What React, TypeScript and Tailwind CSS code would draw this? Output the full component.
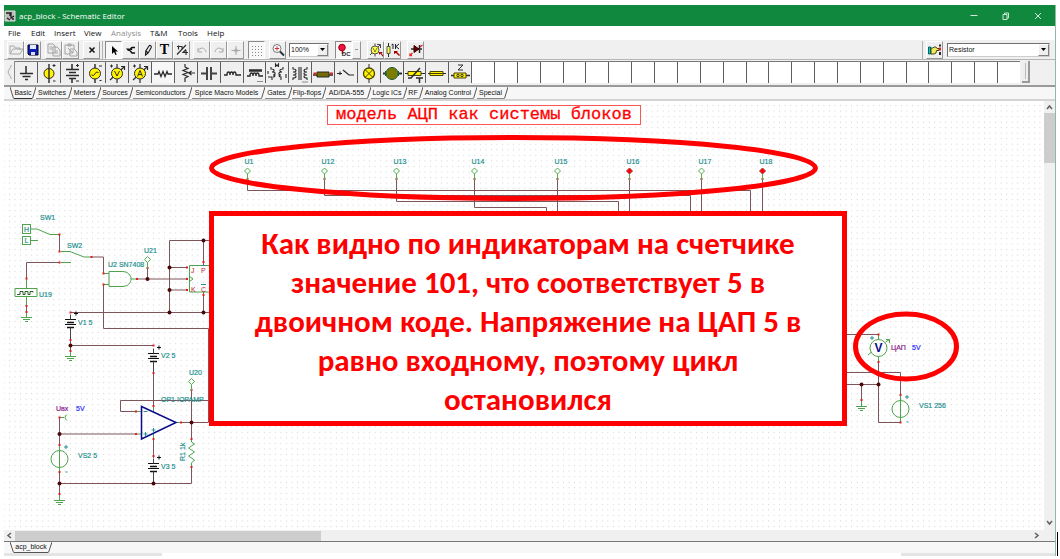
import React from "react";

const SANS = "font-['Liberation_Sans',sans-serif]";
const UI = "font-['Open_Sans','Noto_Sans',sans-serif]";

function Icon({ children, w = 16, h = 16 }: { children: React.ReactNode; w?: number; h?: number }) {
  return (
    <svg width={w} height={h} viewBox={`0 0 ${w} ${h}`} fill="none" stroke="#2a2a2a" strokeWidth="1" aria-hidden="true" className="shrink-0">
      {children}
    </svg>
  );
}

function ToolButton({ label, pressed, children }: { label: string; pressed?: boolean; children: React.ReactNode }) {
  return (
    <button
      type="button"
      aria-label={label}
      className={
        "flex h-[18px] w-[17px] shrink-0 items-center justify-center overflow-hidden border " +
        (pressed
          ? "border-t-[#8a8a8a] border-l-[#8a8a8a] border-r-white border-b-white bg-[#f8f8f8]"
          : "border-t-white border-l-white border-r-[#969696] border-b-[#969696] bg-[#efefef]")
      }
    >
      {children}
    </button>
  );
}

const folder = <Icon><path d="M2 12V4h4l1 2h5v2M2 12l3-5h10l-3 5z" stroke="#a8a8a8" /></Icon>;
const save = (
  <Icon>
    <path d="M3 3h10v10H4l-1-1z" fill="#0a1fbc" stroke="#001" />
    <path d="M5 3h6v4H5z" fill="#e8ecff" stroke="none" />
    <path d="M6 10h4v3H6z" fill="#dde" stroke="none" />
  </Icon>
);
const copy = <Icon><path d="M2 2h5l2 2v7H2zM7 5h4l3 3v6H7zM3.500 5h3M3.500 7h3M9 9h3M9 11h3" stroke="#a3a3a3" /></Icon>;
const paste = <Icon><path d="M2 3h9v4M2 3v9h5M5 2h3v2H5zM7 7h4l3 3v4H7zM5 6l5 5M10 8v3H7" stroke="#a3a3a3" /></Icon>;
const cross = <Icon><path d="M5.500 5.500l5 5M10.500 5.500l-5 5" strokeWidth="1.500" stroke="#111" /></Icon>;
const pointer = <Icon><path d="M6 4v8l2-2 1.500 3 1.200-.6L9.300 9.500H12z" fill="#000" stroke="none" /></Icon>;
const node = <Icon><path d="M12 5.500H9L6.500 8 9 11h3M8.500 5v3" strokeWidth="1.400" stroke="#111" /><path d="M3 6.500h3.500l1 2-2.500.5z" fill="#111" stroke="none" /></Icon>;
const pencil = <Icon><path d="M5.500 13l.3-4L9 4c1-1.200 2.800-.2 2.200 1.400L8.200 11zM5.800 9l2.400 1.800" strokeWidth="1.100" stroke="#111" /></Icon>;
const fraction = <Icon><path d="M4.500 3.500v4M3 4.500h5V7M3 12.500l9-9.500M12 7.500L9 10.500h5M12 8v5" strokeWidth="1.100" /></Icon>;
const undo = <Icon><path d="M4 6v4h4M4 9c2-4 7-4 8 1" stroke="#aaa" /></Icon>;
const redo = <Icon><path d="M12 6v4H8M12 9C10 5 5 5 4 10" stroke="#aaa" /></Icon>;
const plus = <Icon><path d="M8 4v9M3.500 8.500h9" stroke="#aaa" /><circle cx="8" cy="8.500" r="1.500" stroke="#aaa" /></Icon>;
const dots = <Icon><path d="M3 4.500h11M3 7.500h11M3 10.500h11M3 13.500h11" stroke="#888" strokeDasharray="1 2" /></Icon>;
const magnifier = (
  <Icon>
    <circle cx="7" cy="6.500" r="4" stroke="#777" fill="#fff" />
    <path d="M4.800 6.500h4.400M7 4.300v4.400" stroke="#c33" />
    <path d="M10 9.500l4 4" stroke="#333" strokeWidth="2" />
  </Icon>
);
const dc = (
  <Icon>
    <circle cx="6" cy="5.500" r="3.300" fill="#f0104a" stroke="#900" />
    <path d="M6.500 9v3" stroke="#b00" strokeWidth="1.500" />
  </Icon>
);
const meter = (
  <Icon>
    <path d="M2 13L12 3M9 2.500h3.500V6M7 1.500v13" stroke="#444" />
    <circle cx="7" cy="8" r="4" fill="#ff4" stroke="#555" />
    <path d="M5 6l2 4 2-4" stroke="#774" />
    <path d="M11 10h4l-1.500 1 2 3-1 .6-2-3L11 13z" fill="#a00" stroke="none" />
  </Icon>
);
const probe = (
  <Icon>
    <path d="M3.500 1v14" /><path d="M2 4.500h3v7H2z" fill="#ff4" stroke="#554" />
    <path d="M6.500 3l1.500-1v5M10.500 2v5M14 2l-3 2.500L14 7" stroke="#222" />
    <path d="M9 9h4l-1 1 3 3-1 1-3-3-2 1z" fill="#a00" stroke="none" />
  </Icon>
);
const diode = (
  <Icon>
    <path d="M3 7h11M11.500 3v8" strokeWidth="1.500" />
    <path d="M6 3.500L11 7 6 10.500z" fill="#600" stroke="#400" />
    <path d="M1.500 13.500L4.500 11M2 11.500v2h2M12 5l2.500-2" stroke="#e22" strokeWidth="1.300" />
  </Icon>
);
const hand = (
  <Icon>
    <path d="M1.500 5h2v7h-2z" fill="#0cc" stroke="#066" />
    <path d="M4 6h2l1-1h2l1 1.500h2v2H9.500L9 11l-2 1H4z" fill="#ee5" stroke="#442" />
    <path d="M13 2.500v2M13 10v3" strokeWidth="2" />
    <path d="M13 5.500v3" stroke="#d22" strokeWidth="2" />
  </Icon>
);

/* Component palette drawings, each on a 22 x 22 field */
const parts: { name: string; art: React.ReactNode; pressed?: boolean }[] = [
  { name: "Ground", art: <path d="M11 4v7M5 11.500h13M7.500 14.500h8M10 17.500h3" strokeWidth="1.500" /> },
  { name: "Battery", art: <><circle cx="11" cy="11.500" r="5" fill="#fff200" /><path d="M11 2v19" strokeWidth="1.400" /><path d="M14.500 3.500h3M16 2v3M15 19h2.500" /></> },
  { name: "Voltage source", art: <><path d="M11 2v5M11 17v4M5 7.500h13M8 10.500h7M5 13.500h13M8 16.500h7" strokeWidth="1.500" /><path d="M15 3.500h3M16.500 2v3M15 19h3" /></> },
  { name: "Generator", art: <><path d="M11 2v19" strokeWidth="1.400" /><circle cx="11" cy="11.500" r="5.500" fill="#fff200" /><path d="M7.500 13l2 .5 3-3.500 2 .5M15 4h3M15.500 18.500h2" /></> },
  { name: "Voltmeter", art: <><path d="M11 2v19M4 18L18 5M15 4.500h3.500V8" strokeWidth="1.200" /><circle cx="11" cy="11.500" r="5.500" fill="#fff200" /><path d="M8.500 9l2.500 5 2.500-5M4 4h3M5.500 2.500v3" /></> },
  { name: "Ammeter", art: <><path d="M11 2v19M4 18L18 5M15 4.500h3.500V8" strokeWidth="1.200" /><circle cx="11" cy="11.500" r="5.500" fill="#fff200" /><path d="M8.500 14.500l2.500-6 2.500 6M9.500 12.500h3M4 4h3M5.500 2.500v3" /></> },
  { name: "Resistor", pressed: true, art: <path d="M2 12h4l1-2.500 2 5 2-5 2 5 2-5 1 2.500h4" strokeWidth="1.300" /> },
  { name: "Potentiometer", art: <path d="M10 2v3l3 1.500-5 2 5 2-5 2 5 2-3 1.500v4M20 11h-6M16.500 9L14 11l2.500 2" strokeWidth="1.200" /> },
  { name: "Capacitor", art: <path d="M3 11.500h6M13 11.500h6M9 5v13M13 5v13" strokeWidth="2" stroke="#444" /> },
  { name: "Inductor", art: <path d="M3 13h3c0-4 3-4 3 0 0-4 3-4 3 0 0-4 3-4 3 0h5" strokeWidth="1.400" /> },
  { name: "Iron core inductor", art: <><path d="M5 8.500h13" strokeWidth="2.500" /><path d="M3 14h3c0-4 3-4 3 0 0-4 3-4 3 0 0-4 3-4 3 0h4" strokeWidth="1.400" /><path d="M13.500 19.500h6" strokeDasharray="1 1" /></> },
  { name: "Coupled inductors", art: <path d="M2 9v3M2 15h4v3M5 5v2c4 0 4 3 1 3 4 0 4 3 1 3 3 0 2 2 0 2M17 5v2c-4 0-4 3-1 3-4 0-4 3-1 3-3 0-2 2 0 2v3M9.500 5V2l1.500 2 1.500-2v3M20 12v4" strokeWidth="1.100" /> },
  { name: "Transformer", art: <><path d="M4 5v2c4 0 4 3 0 3 4 0 4 3 0 3 4 0 4 3 0 3v2M18 5v2c-4 0-4 3 0 3-4 0-4 3 0 3-4 0-4 3 0 3v2M10 5v13M12 5v13" strokeWidth="1.100" /><path d="M13.500 20h6" strokeDasharray="1 1" /></> },
  { name: "Relay coil", art: <><path d="M1 13h20" strokeWidth="1.500" /><path d="M5 10h12v5H5z" fill="#756b00" /><path d="M1.500 11.500h3M18 11.500h3" stroke="#d22" strokeWidth="2" /></> },
  { name: "Switch", art: <path d="M2 11.500h5M5 9.500v3.500M8 8l6 5h5" strokeWidth="1.200" /> },
  { name: "Bulb", art: <><path d="M11 2v19" /><circle cx="11" cy="11.500" r="5.500" fill="#fff200" stroke="#4b4300" strokeWidth="1.300" /><path d="M7 7.500l8 8M15 7.500l-8 8" stroke="#4b4300" /></> },
  { name: "Motor", art: <><path d="M2 11.500h19" strokeWidth="2" /><circle cx="11" cy="11.500" r="6" fill="#7c7c00" stroke="#1e5a30" /><path d="M4.500 9v5M17.500 9v5" stroke="#164" /></> },
  { name: "Thermistor", art: <><path d="M1 11.500h20" /><path d="M4 9.500h13v4H4z" fill="#fff200" stroke="#4b4300" /><path d="M4 16h3L16 6M12 16h7M15.500 16v5" strokeWidth="1.500" /></> },
  { name: "Fuse", art: <><path d="M2 11.500h18" /><path d="M4 9.500h13v4H4z" fill="#fff200" stroke="#4b4300" /><path d="M4 11.500h13" stroke="#4b4300" /></> },
  { name: "Impedance", art: <><path d="M2 13.500h19" strokeWidth="1.500" /><path d="M5 11h12v5H5z" fill="#fff200" stroke="#4b4300" /><path d="M9 3h5l-5 5h5" /><circle cx="9" cy="13.500" r="1.200" /><circle cx="13" cy="13.500" r="1.200" /></> },
];

const tabs: [string, string][] = [
  ["Basic", "w-[26px]"],
  ["Switches", "w-[36px]"],
  ["Meters", "w-[29px]"],
  ["Sources", "w-[32px]"],
  ["Semiconductors", "w-[59px]"],
  ["Spice Macro Models", "w-[73px]"],
  ["Gates", "w-[27px]"],
  ["Flip-flops", "w-[34px]"],
  ["AD/DA-555", "w-[45px]"],
  ["Logic ICs", "w-[36px]"],
  ["RF", "w-[16px]"],
  ["Analog Control", "w-[54px]"],
  ["Special", "w-[31px]"],
];

const menus: [string, string][] = [
  ["File", "w-[23px]"],
  ["Edit", "w-[23px]"],
  ["Insert", "w-[30px]"],
  ["View", "w-[27px]"],
  ["Analysis", "w-[39px] text-[#8d8d8d]"],
  ["T&M", "w-[28px]"],
  ["Tools", "w-[29px]"],
  ["Help", "w-[24px]"],
];

function Ground({ x, y }: { x: number; y: number }) {
  return <path d={`M${x} ${y - 6}v6M${x - 5.5} ${y}h11M${x - 3.5} ${y + 2}h7M${x - 1.500} ${y + 4}h3`} stroke="#4fa34f" />;
}

function Cell({ x, y }: { x: number; y: number }) {
  return (
    <g stroke="#111">
      <path d={`M${x - 5.5} ${y}h11M${x - 5.5} ${y + 5}h11`} />
      <path d={`M${x - 3.5} ${y + 3}h7M${x - 3.5} ${y + 8}h7`} strokeWidth="1.500" />
      <path d={`M${x} ${y - 5}v5M${x} ${y + 8}v12`} stroke="#444" />
      <path d={`M${x + 3.500} ${y - 6}h4M${x + 5.500} ${y - 8}v4`} />
    </g>
  );
}

function Source({ x, y }: { x: number; y: number }) {
  return (
    <g stroke="#4fa34f">
      <circle cx={x} cy={y} r="8.500" />
      <path d={`M${x} ${y - 13}v26`} />
      <path d={`M${x + 4.500} ${y - 12}h4M${x + 6.500} ${y - 14}v4M${x + 6} ${y + 13}h2`} stroke="#2b9090" />
    </g>
  );
}

function Indicator({ x, y, on }: { x: number; y: number; on?: boolean }) {
  return (
    <g>
      <path d={`M${x} ${y + 3}v6`} stroke="#4fae4f" />
      <path d={`M${x} ${y - 3}l3 3-3 3-3-3z`} fill={on ? "#f00" : "#fff"} stroke={on ? "#a33" : "#4fae4f"} />
    </g>
  );
}

const indicators: [string, number, boolean, string][] = [
  ["U1", 247.5, false, "V190.500H750.500V220"],
  ["U12", 324.5, false, "V195.500H690.500V220"],
  ["U13", 396.5, false, "V201.500H618.500V220"],
  ["U14", 474.5, false, "V207.500H546.500V220"],
  ["U15", 557.5, false, "V220"],
  ["U16", 629.5, true, "V220"],
  ["U17", 701.5, false, "V220"],
  ["U18", 762.5, true, "V220"],
];

const junctions = [
  [147.5, 279], [169.5, 267.5], [169.5, 290], [169.5, 312.5], [203.5, 240.5], [203.5, 312.5], [70.5, 345.5],
  [191.5, 422.5], [59.5, 434], [59.5, 483.5], [153.5, 483.5], [861.5, 384.5], [878.5, 384.5],
];

const pins = [
  [247.5, 179], [324.5, 179], [396.5, 179], [474.5, 179], [557.5, 179], [629.5, 179], [701.5, 179], [762.5, 179],
  [59.5, 234.5], [59.5, 251.5], [91.5, 257], [59.5, 262.5], [26.5, 278.5], [26.5, 306], [26.5, 312], [103.5, 273.5], [103.5, 284.5],
  [137, 279], [147.5, 268], [187, 267.5], [187, 279], [187, 290], [203.5, 262], [203.5, 295], [70.5, 312.5], [70.5, 340], [70.5, 351],
  [153.5, 345.5], [153.5, 373], [153.5, 406], [153.5, 439], [153.5, 456], [136, 411.5], [136, 434], [181, 422.5], [191.5, 390],
  [191.5, 439], [191.5, 467], [59.5, 417.5], [59.5, 445], [59.5, 472], [59.5, 494], [878.5, 334.5], [878.5, 362], [861.5, 400], [900.5, 395], [900.5, 422.5],
];

function Schematic() {
  return (
    <svg width="1040" height="429" viewBox="4 101 1040 429" fill="none" strokeWidth="1" className="block" role="img" aria-label="Schematic">
      <defs>
        <pattern id="grid" x="9" y="105" width="5.540" height="5.540" patternUnits="userSpaceOnUse">
          <rect width="1" height="1" fill="#d2d2d2" />
        </pattern>
      </defs>
      <rect x="4" y="101" width="1040" height="429" fill="url(#grid)" />

      <rect x="327.500" y="105.500" width="313" height="19" fill="#fff" stroke="#f55" />
      <text x="336" y="119" fill="#f00" stroke="#f00" strokeWidth="0.300" fontSize="17" className="font-['Liberation_Mono',monospace]">модель АЦП как системы блоков</text>

      <g stroke="#7d555a">
        {indicators.map(([n, x, , d]) => <path key={n} d={`M${x} 179${d}`} />)}
        <path d="M59.500 234.500V251.500M91 257H103.500V273M59.500 262.500H26.500V278M26.500 305V313" />
        <path d="M137 279H188M147.500 268V279M169.500 240.500V312.500M169.500 240.500H212M169.500 267.500H188M169.500 290H188M203.500 240.500V265M203.500 292V312.500M70.500 312.500H212" />
        <path d="M103.500 284.500V328.500H208.500V422.500M70.500 340V350M70.500 345.500H153.500M153.500 370V408M191.500 390V440M120.500 400.500H208.500M120.500 400.500V411.500H136M181 422.500H208.500M191.500 466V483.500H59.500" />
        <path d="M59.500 417.500V446M59.500 434H136M153.500 437V458M59.500 472V494M846 334.500H878.500M846 372.500H900.500V396M846 384.500H878.500M861.500 384.500V400M878.500 361V422.500H900.500" />
      </g>

      <g stroke="#4fa34f">
        <rect x="22.500" y="224.500" width="8" height="9" />
        <rect x="22.500" y="236.500" width="8" height="8" />
        <path d="M31 229H37L50 234.500H59M31 240.500H38M61 251.500H70L84 257H91M61 262.500H71" />
        <path d="M26.500 279V288M26.500 297V305M15 288.500h22v8H15z" />
        <path d="M17 294.500h3v-3h3v3h2v-3h3v3h2v-3h3v1" stroke="#285a28" />
        <path d="M109 271.500H122C134 271.500 134 286.500 122 286.500H109ZM104 273.500H109M104 284.500H109M131 279H137" />
        <path d="M212 265.500H189.500V292H212M189.500 276.500L193 279L189.500 281.500" />
        <path d="M191.500 438V442L194.500 444L188.500 448L194.500 452L188.500 456L194.500 460L191.500 463V467" />
        <path d="M60 417.500H64M67 414.500Q63 417.500 67 420.500M137 411.500H141M137 434H141M176 422.500H181M153.500 406V412M153.500 433V438" />
        <circle cx="878.500" cy="348" r="8.500" />
        <path d="M878.500 335V339.500M878.500 356.500V361M868 355L871.500 352M885.500 342L889.500 339.500M886 339.500H889.500V343" />
      </g>
      <Ground x={26.500} y={317.500} />
      <Ground x={70.500} y={356.500} />
      <Ground x={59.500} y={500.500} />
      <Ground x={861.500} y={406.500} />
      <Cell x={70.500} y={319.500} />
      <Cell x={153.500} y={353.500} />
      <Cell x={153.500} y={463.500} />
      <Source x={59.500} y={459} />
      <Source x={900.500} y={409} />
      <path d="M141.500 406.500V439L176 422.500Z" stroke="#0b0b8c" strokeWidth="1.500" />
      <path d="M143.500 411.500h4M143.500 434h4M145.500 432v4M151.500 430h4M153.500 428v4M870 338h4M872 336v4" stroke="#2b9090" />

      {pins.map(([x, y]) => <rect key={`${x}-${y}`} x={x - 1} y={y - 1} width="2" height="2" fill="#e02020" />)}
      {junctions.map(([x, y]) => <circle key={`${x}-${y}`} cx={x} cy={y} r="2" fill="#4a0808" />)}
      {indicators.map(([n, x, on]) => <Indicator key={n} x={x} y={171} on={on} />)}
      <Indicator x={147.500} y={259.500} />
      <Indicator x={191.500} y={381.500} />

      <g className={SANS} fontSize="7" fill="#1f9090" stroke="#1f9090" strokeWidth="0.200">
        {indicators.map(([n, x]) => <text key={n} x={x - 3} y="164">{n}</text>)}
        <text x="40" y="220">SW1</text>
        <text x="67" y="248">SW2</text>
        <text x="24" y="232">H</text>
        <text x="24.500" y="243">L</text>
        <text x="39" y="297">U19</text>
        <text x="108" y="267">U2 SN7408</text>
        <text x="144" y="253">U21</text>
        <text x="78" y="325">V1 5</text>
        <text x="161" y="358">V2 5</text>
        <text x="189" y="375">U20</text>
        <text x="161" y="402">OP1 !OPAMP</text>
        <text x="161" y="469">V3 5</text>
        <text x="78" y="458">VS2 5</text>
        <text x="185" y="461" transform="rotate(-90 185 461)">R1 1k</text>
        <text x="919" y="408">VS1 256</text>
      </g>
      <g className={SANS} fontSize="7" fill="#c0203a">
        <text x="191" y="273">J</text><text x="201" y="273">P</text><text x="191" y="292">K</text><text x="201" y="292">C</text>
        <path d="M201 265.500h5M201 284.500h5" stroke="#2b9090" />
      </g>
      <g className={SANS} fontSize="7" strokeWidth="0.200">
        <text x="56" y="411" fill="#8b1a8b" stroke="#8b1a8b">Uвх</text>
        <text x="76" y="411" fill="#2a2aff" stroke="#2a2aff">5V</text>
        <text x="891" y="350" fill="#8b1a8b" stroke="#8b1a8b">ЦАП</text>
        <text x="912" y="350" fill="#2a2aff" stroke="#2a2aff">5V</text>
        <text x="874.500" y="352" fill="#0b0b8c" fontSize="12" fontWeight="700">V</text>
      </g>

      <ellipse cx="513.500" cy="168" rx="302" ry="30.500" stroke="#f00" strokeWidth="5" />
      <ellipse cx="906" cy="346.500" rx="50.500" ry="32.500" stroke="#f00" strokeWidth="5" />
    </svg>
  );
}

function Chevron({ d }: { d: string }) {
  return <svg width="7" height="7" viewBox="0 0 7 7" fill="none" stroke="#606060" strokeWidth="1.500"><path d={d} /></svg>;
}

function DropDown({ label, value, width }: { label: string; value: string; width: string }) {
  return (
    <div className={`flex h-[14px] shrink-0 items-stretch border border-t-[#707070] border-l-[#707070] border-r-[#ccc] border-b-[#ccc] bg-white ${width}`}>
      <select aria-label={label} className={`min-w-0 flex-1 appearance-none bg-white pl-px text-[7px] leading-[12px] text-[#111] outline-none ${SANS}`}>
        <option>{value}</option>
      </select>
      <span className="flex w-[11px] items-center justify-center border border-t-white border-l-white border-r-[#808080] border-b-[#808080] bg-[#efefef]">
        <svg width="5" height="3" viewBox="0 0 5 3"><path d="M0 0h5L2.500 3z" fill="#000" /></svg>
      </span>
    </div>
  );
}

export default function App() {
  return (
    <div className="flex items-end bg-white pt-[5px] pl-1">
      <div className="flex min-w-0 flex-1 flex-col border-r border-[#8fb9a0] bg-[#f0f0f0]">
        <header className="flex h-[21px] items-center bg-[#10893e] text-white">
          <Icon w={12} h={12}>
            <path d="M1 1h10v10H1z" fill="#bbb" stroke="#ddd" />
            <path d="M2 3h4v3M7 2v6l3-2M3 8l3 2M8 9h2" stroke="#222" strokeWidth="1.300" />
          </Icon>
          <h1 className={`ml-[3px] flex-1 text-[8px] leading-[12px] ${UI}`}>acp_block - Schematic Editor</h1>
          <div className="flex pr-[1px]">
            <button type="button" aria-label="Minimize" className="flex w-8 justify-center"><Icon w={8} h={8}><path d="M.5 3.500h7" stroke="#cfe8d8" /></Icon></button>
            <button type="button" aria-label="Restore" className="flex w-8 justify-center"><Icon w={8} h={8}><path d="M1 2.500h4v5H1zM2.500 2V1h4v5H5" stroke="#cfe8d8" /></Icon></button>
            <button type="button" aria-label="Close" className="flex w-8 justify-center"><Icon w={8} h={8}><path d="M1 1l6 6M7 1l-6 6" stroke="#cfe8d8" /></Icon></button>
          </div>
        </header>

        <nav className={`flex h-[14px] items-center bg-white pl-1 text-[8px] leading-[14px] text-[#111] ${UI}`}>
          {menus.map(([m, w]) => <button type="button" key={m} className={`shrink-0 text-left ${w}`}>{m}</button>)}
        </nav>

        <div className="flex h-[20px] items-center border-b border-[#b5b5b5] pl-[3px]">
          <ToolButton label="Open">{folder}</ToolButton>
          <ToolButton label="Save">{save}</ToolButton>
          <span className="w-1" />
          <ToolButton label="Copy">{copy}</ToolButton>
          <ToolButton label="Paste">{paste}</ToolButton>
          <span className="w-1" />
          <ToolButton label="Delete">{cross}</ToolButton>
          <span className="mx-[2px] h-[18px] w-px bg-[#b0b0b0]" />
          <ToolButton label="Select" pressed>{pointer}</ToolButton>
          <ToolButton label="Last component">{node}</ToolButton>
          <ToolButton label="Wire">{pencil}</ToolButton>
          <ToolButton label="Text"><span className="font-['Liberation_Serif',serif] text-[14px] leading-none font-bold">T</span></ToolButton>
          <ToolButton label="Output">{fraction}</ToolButton>
          <span className="w-[3px]" />
          <ToolButton label="Undo">{undo}</ToolButton>
          <ToolButton label="Redo">{redo}</ToolButton>
          <ToolButton label="Mirror">{plus}</ToolButton>
          <span className="w-1" />
          <ToolButton label="Grid" pressed>{dots}</ToolButton>
          <span className="w-1" />
          <ToolButton label="Zoom">{magnifier}</ToolButton>
          <span className="w-[3px]" />
          <DropDown label="Zoom level" value="100%" width="w-[40px]" />
          <span className="w-[6px]" />
          <ToolButton label="DC" pressed>
            <span className="relative">
              {dc}
              <span className={`absolute right-px bottom-px text-[6px] leading-[6px] font-bold text-[#222] ${SANS}`}>DC</span>
            </span>
          </ToolButton>
          <button type="button" aria-label="More modes" className="flex h-[18px] w-[9px] items-center justify-center border border-t-white border-l-white border-r-[#969696] border-b-[#969696]">
            <svg width="3" height="2"><path d="M0 0h3v1H0z" fill="#999" /></svg>
          </button>
          <span className="w-[6px]" />
          <ToolButton label="Meter probe">{meter}</ToolButton>
          <ToolButton label="Component value">{probe}</ToolButton>
          <span className="w-[6px]" />
          <ToolButton label="Fault">{diode}</ToolButton>
          <span className="flex-1" />
          <span className="mr-[3px] h-[18px] w-px bg-[#b0b0b0]" />
          <ToolButton label="Find component">{hand}</ToolButton>
          <span className="w-1" />
          <DropDown label="Component" value="Resistor" width="w-[103px] mr-[5px]" />
        </div>

        <div className="flex h-[27px] border-b-2 border-[#9a9a9a] pt-px pb-[2px]">
          <button type="button" aria-label="Scroll left" className="flex w-[11px] shrink-0 items-center justify-center border-r border-[#888]">
            <svg width="5" height="16" viewBox="0 0 5 16" fill="none" stroke="#aaa"><path d="M4.500 1L1 8l3.500 7" /></svg>
          </button>
          <div className="flex min-w-0 flex-1 border-t border-[#777] bg-white">
            {Array.from({ length: 44 }, (_, i) => {
              const part = parts[i];
              return part ? (
                <button
                  type="button"
                  key={i}
                  aria-label={part.name}
                  className={`flex min-w-0 flex-1 items-center justify-center overflow-hidden border-r border-[#5e5e5e] ${part.pressed ? "bg-[#f7f7f7]" : "bg-[#efefef]"}`}
                >
                  <Icon w={22} h={22}>{part.art}</Icon>
                </button>
              ) : (
                <span key={i} className="min-w-0 flex-1 border-r border-[#5e5e5e] bg-white last:border-r-0" />
              );
            })}
          </div>
          <button type="button" aria-label="Scroll right" className="ml-[2px] mr-[25px] flex w-[8px] shrink-0 items-center justify-center border-r-2 border-b-2 border-[#9a9a9a] bg-[#eee]">
            <span className="h-4 w-px bg-[#bbb]" />
          </button>
        </div>

        <div className={`flex h-[14px] border-b-2 border-[#d4d4d4] bg-[#f7f7f7] pl-[6px] text-[7px] leading-[11px] text-[#111] ${SANS}`}>
          {tabs.map(([t, w], i) => (
            <button type="button" key={t} className={`flex shrink-0 ${w}`}>
              {i === 0 && <svg width="4" height="12" viewBox="0 0 4 12" fill="none" stroke="#555" className="shrink-0"><path d="M0 0l3.500 11.500" /></svg>}
              <span className={`min-w-0 flex-1 border-b text-center whitespace-nowrap ${i === 0 ? "border-[#333]" : "border-[#888]"}`}>{t}</span>
              <svg width="4" height="12" viewBox="0 0 4 12" fill="none" stroke="#555" className="shrink-0"><path d="M4 0L.5 11.500" /></svg>
            </button>
          ))}
        </div>

        <div className="flex">
          <main className="relative min-w-0 flex-1 overflow-hidden bg-white">
            <Schematic />
            <p className="absolute top-[110px] left-[205px] w-[638px] border-[5px] border-[#f00] bg-white pt-[8px] pb-[2px] text-center font-['Carlito','Lato','Open_Sans',sans-serif] text-[31px] leading-[39px] font-bold text-[#f00]">
              Как видно по индикаторам на счетчике<br />
              значение 101, что соответствует 5 в<br />
              двоичном коде. Напряжение на ЦАП 5 в<br />
              равно входному, поэтому цикл<br />
              остановился
            </p>
          </main>
          <div className="flex w-[11px] shrink-0 flex-col items-center bg-[#f0f0f0]">
            <span className="flex h-3 items-center"><Chevron d="M1 5l2.500-3L6 5" /></span>
            <span className="h-[50px] w-full bg-[#cdcdcd]" />
            <span className="flex-1" />
            <span className="flex h-4 items-center"><Chevron d="M1 2l2.500 3L6 2" /></span>
          </div>
        </div>

        <div className="flex h-[11px] items-center bg-[#f0f0f0] pl-[2px] pr-[15px]">
          <span className="w-[9px]"><Chevron d="M5 1L2 3.500 5 6" /></span>
          <span className="h-[10px] w-[306px] bg-[#cdcdcd]" />
          <span className="flex-1" />
          <Chevron d="M2 1l3 2.500L2 6" />
        </div>
        <div className={`flex h-[12px] border-t border-[#777] bg-[#f7f7f7] pl-[6px] text-[7px] leading-[10px] text-[#111] ${SANS}`}>
          <svg width="4" height="11" viewBox="0 0 4 11" fill="none" stroke="#555"><path d="M0 0l3.500 10.500" /></svg>
          <button type="button" className="w-[34px] border-b border-[#555] text-center">acp_block</button>
          <svg width="4" height="11" viewBox="0 0 4 11" fill="none" stroke="#555"><path d="M4 0L.5 10.500" /></svg>
        </div>
        <div className="flex h-[3px] bg-white">
          <span className="w-[158px] bg-[#e4e4e4]" />
          <span className="flex-1" />
          <span className="w-[154px] bg-[#e4e4e4]" />
        </div>
      </div>
      <span className="mr-[2px] ml-px h-[24px] w-px bg-black" />
    </div>
  );
}
